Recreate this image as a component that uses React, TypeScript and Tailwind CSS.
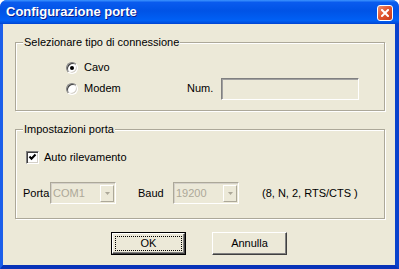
import React from "react";

function Group({
  label,
  className,
  children,
}: {
  label: string;
  className: string;
  children: React.ReactNode;
}) {
  return (
    <div className={className}>
      <span className="absolute -top-[8px] left-[7px] px-[1px] bg-[#ECE9D8] leading-[14px] whitespace-nowrap">
        {label}
      </span>
      {children}
    </div>
  );
}

function Radio({ checked }: { checked?: boolean }) {
  return (
    <span className="w-[12px] h-[12px] shrink-0 rounded-full bg-white border border-t-[#808080] border-l-[#808080] border-r-white border-b-white shadow-[inset_1px_1px_0_#404040,inset_-1px_-1px_0_#D4D0C8] flex items-center justify-center">
      {checked && <span className="w-[4px] h-[4px] rounded-full bg-black" />}
    </span>
  );
}

function Check() {
  return (
    <span className="w-[13px] h-[13px] shrink-0 bg-white border border-t-[#808080] border-l-[#808080] border-r-white border-b-white shadow-[inset_1px_1px_0_#404040,inset_-1px_-1px_0_#D4D0C8] flex items-center justify-center">
      <svg width="9" height="9" viewBox="0 0 9 9">
        <path d="M1.5 3.5 L3.5 5.8 L7.5 1.5" fill="none" stroke="#000" strokeWidth="2" />
      </svg>
    </span>
  );
}

function Combo({ value }: { value: string }) {
  return (
    <div className="w-[66px] h-[22px] shrink-0 flex items-center justify-between border border-t-[#ACA899] border-l-[#ACA899] border-r-white border-b-white shadow-[inset_1px_1px_0_#D4D0C8]">
      <span className="pl-[2px] text-[#ACA899]">{value}</span>
      <span className="w-[14px] h-[17px] mr-[1px] flex items-center justify-center border border-t-white border-l-white border-r-[#ACA899] border-b-[#ACA899] bg-[#ECE9D8]">
        <svg width="5" height="3" viewBox="0 0 5 3">
          <path d="M0 0 H5 L2.5 3 Z" fill="#ACA899" />
        </svg>
      </span>
    </div>
  );
}

export default function App() {
  return (
    <div className="w-[399px] h-[269px] bg-white font-['Liberation_Sans',Arial,sans-serif] text-[11px] text-black">
      <div className="w-full h-full flex flex-col rounded-t-[7px] overflow-hidden bg-[#0A4BDA]">
        <div className="h-[24px] shrink-0 flex items-center justify-between pl-[6px] pr-[6px] bg-[linear-gradient(to_bottom,#3D95FF_0%,#0A5BEE_10%,#0053E6_45%,#0060F5_85%,#0051E0_95%,#0040D0_100%)]">
          <span className="text-white font-bold text-[13px] leading-[16px] [text-shadow:1px_1px_0_#0A1D8C]">
            Configurazione porte
          </span>
          <span className="w-[16px] h-[16px] mt-[1px] rounded-[3px] border border-white bg-[linear-gradient(135deg,#F0906F_0%,#E2562F_45%,#C83A1A_100%)] flex items-center justify-center">
            <svg width="8" height="8" viewBox="0 0 8 8">
              <path d="M1 1 L7 7 M7 1 L1 7" stroke="#fff" strokeWidth="2" strokeLinecap="square" />
            </svg>
          </span>
        </div>
        <div className="flex-1 flex border-l-[3px] border-l-[#1C5FEA] border-r-[4px] border-r-[#0A42CC] border-b-[4px] border-b-[#0833B8]">
          <div className="flex-1 flex flex-col bg-[#ECE9D8]">
            <Group
              label="Selezionare tipo di connessione"
              className="relative mt-[18px] ml-[12px] w-[370px] h-[69px] border border-[#ACA899] shadow-[1px_1px_0_#fff,inset_1px_1px_0_#fff] pt-[18px] pl-[50px] flex flex-col"
            >
              <div className="h-[13px] flex items-center">
                <Radio checked />
                <span className="ml-[6px]">Cavo</span>
              </div>
              <div className="h-[13px] mt-[8px] flex items-center">
                <div className="w-[121px] flex items-center">
                  <Radio />
                  <span className="ml-[6px]">Modem</span>
                </div>
                <span className="w-[34px]">Num.</span>
                <div className="w-[138px] h-[22px] shrink-0 border border-t-[#808080] border-l-[#808080] border-r-white border-b-white shadow-[inset_1px_1px_0_#A0A0A0,inset_-1px_-1px_0_#ECE9D8] bg-[#ECE9D8]" />
              </div>
            </Group>
            <Group
              label="Impostazioni porta"
              className="relative mt-[18px] ml-[12px] w-[370px] h-[90px] border border-[#ACA899] shadow-[1px_1px_0_#fff,inset_1px_1px_0_#fff] pt-[21px] pl-[7px] flex flex-col"
            >
              <div className="h-[13px] pl-[3px] flex items-center">
                <Check />
                <span className="ml-[5px]">Auto rilevamento</span>
              </div>
              <div className="h-[22px] mt-[18px] flex items-center">
                <span className="w-[27px] overflow-hidden whitespace-nowrap">Porta</span>
                <Combo value="COM1" />
                <span className="w-[35px] ml-[22px]">Baud</span>
                <Combo value="19200" />
                <span className="ml-[23px] whitespace-nowrap">(8, N, 2, RTS/CTS )</span>
              </div>
            </Group>
            <div className="mt-[13px] flex justify-center gap-[26px]">
              <div className="w-[75px] h-[23px] border border-black">
                <div className="w-full h-full border border-t-white border-l-white border-r-[#404040] border-b-[#404040] shadow-[inset_-1px_-1px_0_#808080] p-[2px]">
                  <div className="w-full h-full border border-dotted border-black flex items-center justify-center">
                    OK
                  </div>
                </div>
              </div>
              <div className="w-[75px] h-[23px] border border-t-white border-l-white border-r-[#404040] border-b-[#404040] shadow-[inset_-1px_-1px_0_#808080] flex items-center justify-center">
                Annulla
              </div>
            </div>
          </div>
        </div>
      </div>
    </div>
  );
}
